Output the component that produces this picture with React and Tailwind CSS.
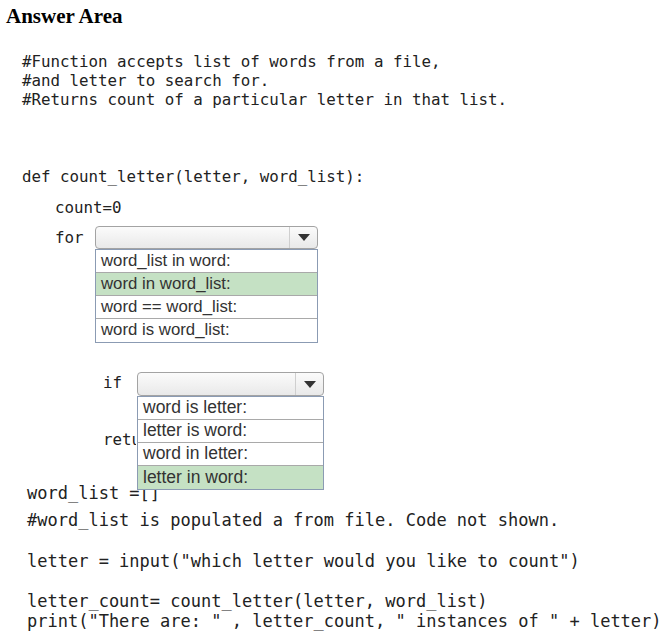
import React from "react";

const mono = { fontFamily: '"DejaVu Sans Mono", "Liberation Mono", monospace' };

function Arrow() {
  return (
    <svg width="12" height="7" viewBox="0 0 12 7">
      <polygon points="0,0 12,0 6,7" fill="#333" />
    </svg>
  );
}

function Dropdown({ width, height, options, selected, fontSize }) {
  return (
    <div className="relative" style={{ width }}>
      <div
        className="flex rounded-[4px] border border-[#a3a3a3] bg-gradient-to-b from-[#fbfbfb] to-[#e9e9e9]"
        style={{ height }}
      >
        <div className="flex-1" />
        <div className="w-[28px] border-l border-[#cfcfcf] flex items-center justify-center">
          <Arrow />
        </div>
      </div>
      <ul
        className="absolute left-0 right-0 top-full z-10 border border-[#8b9bb3] bg-white font-['Liberation_Sans',Arial,sans-serif] text-[#333]"
        style={{ fontSize }}
      >
        {options.map((o, i) => (
          <li
            key={o}
            className={`h-[23px] flex items-center pl-[5px] leading-none ${
              i < options.length - 1 ? "border-b border-[#a9a9a9]" : ""
            } ${i === selected ? "bg-[#c5e1c4]" : ""}`}
          >
            {o}
          </li>
        ))}
      </ul>
    </div>
  );
}

export default function App() {
  return (
    <div className="w-[664px] h-[641px] bg-white overflow-hidden text-[#222]">
      <h1 className="pt-[4px] pl-[6px] text-[21px] leading-[24px] font-bold text-black font-['Liberation_Serif','Times_New_Roman',serif]">
        Answer Area
      </h1>

      {/* top code */}
      <div className="pl-[22px] text-[15.8px] leading-[19px] whitespace-pre" style={mono}>
        <div className="mt-[24px]">#Function accepts list of words from a file,</div>
        <div>#and letter to search for.</div>
        <div>#Returns count of a particular letter in that list.</div>

        <div className="mt-[58px]">def count_letter(letter, word_list):</div>
        <div className="mt-[12px] pl-[33px]">count=0</div>

        <div className="mt-[9px] pl-[33px] flex items-center">
          <span className="w-[40px]">for</span>
          <Dropdown
            width={223}
            height={23}
            fontSize={16.8}
            selected={1}
            options={["word_list in word:", "word in word_list:", "word == word_list:", "word is word_list:"]}
          />
        </div>

        <div className="mt-[123px] pl-[81px] flex items-center">
          <span className="w-[34px] -mt-[3px]">if</span>
          <Dropdown
            width={187}
            height={24}
            fontSize={17.5}
            selected={3}
            options={["word is letter:", "letter is word:", "word in letter:", "letter in word:"]}
          />
        </div>

        <div className="mt-[34px] pl-[81px]">
          <span className="inline-block w-[33px] overflow-hidden align-top">retu</span>
        </div>
      </div>

      {/* bottom code */}
      <div className="pl-[27px] text-[17px] leading-[20px] whitespace-pre" style={mono}>
        <div className="mt-[34px]">word_list =[]</div>
        <div className="mt-[7px]">#word_list is populated a from file. Code not shown.</div>
        <div className="mt-[21px]">letter = input("which letter would you like to count")</div>
        <div className="mt-[20px]">letter_count= count_letter(letter, word_list)</div>
        <div>print("There are: " , letter_count, " instances of " + letter)</div>
      </div>
    </div>
  );
}
